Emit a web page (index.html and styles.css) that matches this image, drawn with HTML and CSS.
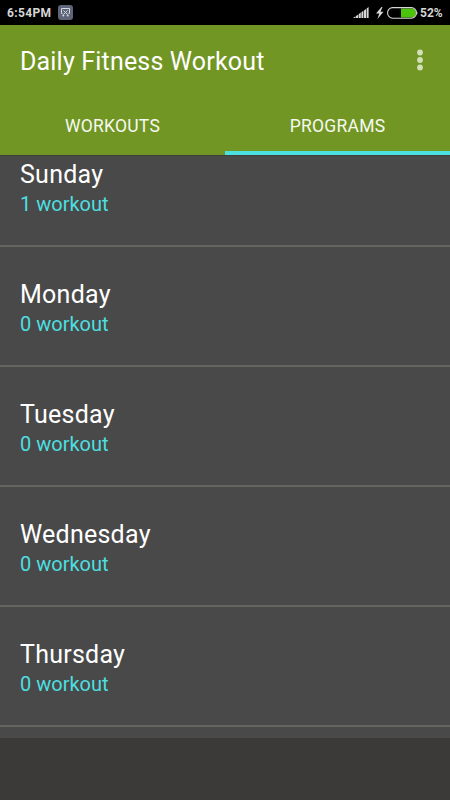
FILE: index.html
```html
<!DOCTYPE html>
<html lang="en">
<head>
    <meta charset="UTF-8">
    <meta name="viewport" content="width=device-width, initial-scale=1.0">
    <title>Daily Fitness Workout</title>
    <link rel="stylesheet" href="styles.css">
</head>
<body>

<!-- Status bar -->
<div class="status-bar">
    <span class="time">6:54PM</span>
    <svg class="app-icon" width="15" height="15" viewBox="0 0 15 15">
        <rect width="15" height="15" rx="3" fill="#5f6478"/>
        <path d="M4.500 8.500h-1v-5h8v5h-1M5.500 5.500l4 4M9.500 5.500l-4 4" fill="none" stroke="#d4d6de" stroke-width="1"/>
        <circle cx="5.300" cy="10.500" r="1" fill="#d4d6de"/>
        <circle cx="9.700" cy="10.500" r="1" fill="#d4d6de"/>
    </svg>
    <div class="status-right">
        <svg class="signal" width="16" height="11" viewBox="0 0 16 11" fill="#d6d6d6">
            <path d="M0 11l2.500-1.700V11zM3 11V9l2.200-1.500V11zM5.800 11V7l2-1.400V11zM8.400 11V5.200l2-1.400V11zM11 11V3.400L13 2v9zM13.600 11V1.500L15.600 0v11z"/>
        </svg>
        <svg class="bolt" width="8" height="12" viewBox="0 0 8 12">
            <path d="M5.500 0L0 6.500h3.200L1.500 12L7.500 4.800H4.500L6.500 0z" fill="#d6d6d6"/>
        </svg>
        <svg class="battery" width="31" height="12" viewBox="0 0 31 12">
            <path d="M14 1.500h11c2.500 0 4 2 4 4.500s-1.500 4.500-4 4.500H14z" fill="#4cc40c"/>
            <rect x="0.600" y="0.600" width="28.800" height="10.600" rx="5" fill="none" stroke="#d6d6d6" stroke-width="1.100"/>
            <path d="M29.500 4c1.300 1 1.300 3 0 4z" fill="#d6d6d6"/>
        </svg>
        <span class="percent">52%</span>
    </div>
</div>

<header>
    <div class="toolbar">
        <h1>Daily Fitness Workout</h1>
        <svg class="menu" width="6" height="22" viewBox="0 0 6 22" fill="#d3e0b8">
            <circle cx="3" cy="3.500" r="2.900"/>
            <circle cx="3" cy="11" r="2.900"/>
            <circle cx="3" cy="18.500" r="2.900"/>
        </svg>
    </div>
    <nav class="tabs">
        <a class="tab">WORKOUTS</a>
        <a class="tab active">PROGRAMS</a>
    </nav>
</header>

<!-- Days list, scrolled a little under the header -->
<main class="list">
    <div class="day">
        <h2>Sunday</h2>
        <p>1 workout</p>
    </div>
    <div class="day">
        <h2>Monday</h2>
        <p>0 workout</p>
    </div>
    <div class="day">
        <h2>Tuesday</h2>
        <p>0 workout</p>
    </div>
    <div class="day">
        <h2>Wednesday</h2>
        <p>0 workout</p>
    </div>
    <div class="day">
        <h2>Thursday</h2>
        <p>0 workout</p>
    </div>
</main>

</body>
</html>
```

FILE: styles.css
```css
* {
    box-sizing: border-box;
}
body {
    font-family: Roboto, sans-serif;
    margin: 0;
    height: 800px;
    overflow: hidden;
    background-color: #3b3a38;
    color: white;
}
.status-bar {
    display: flex;
    align-items: center;
    height: 25px;
    padding: 0 8px 0 7px;
    background-color: black;
    color: #d6d6d6;
    font-size: 12px;
    font-weight: bold;
}
.time {
    width: 45px;
    letter-spacing: 0.35px;
}
.app-icon {
    margin-left: 6px;
}
.status-right {
    display: flex;
    align-items: center;
    margin-left: auto;
}
.bolt {
    margin-left: 7px;
}
.battery {
    margin-left: 3px;
}
.percent {
    width: 22px;
    margin-left: 2px;
}
header {
    height: 130px;
    background-color: #719624;
}
.toolbar {
    display: flex;
    align-items: center;
    justify-content: space-between;
    height: 70px;
    padding: 0 27px 0 20px;
}
h1 {
    margin: 2px 0 0;
    font-size: 25px;
    font-weight: normal;
    letter-spacing: 0.18px;
}
.tabs {
    display: flex;
    height: 60px;
}
.tab {
    flex: 1;
    padding-top: 20px;
    line-height: 22px;
    font-size: 17.5px;
    letter-spacing: 0.25px;
    text-align: center;
    color: #f6f9f0;
}
.tab.active {
    border-bottom: 4px solid #4ddfe0;
}
.list {
    height: 583px;
    overflow: hidden;
    background-color: #494949;
    border-top: 1px solid #3e3e3e;
}
.day {
    height: 120px;
    padding: 33px 20px 0;
    border-bottom: 2px solid #65655d;
}
.day:first-child {
    margin-top: -29px;
}
.day h2 {
    margin: 0;
    font-size: 25px;
    line-height: 30px;
    font-weight: normal;
    letter-spacing: 0.25px;
}
.day p {
    margin: 0;
    font-size: 20px;
    line-height: 29px;
    color: #4ddfe0;
}
```
